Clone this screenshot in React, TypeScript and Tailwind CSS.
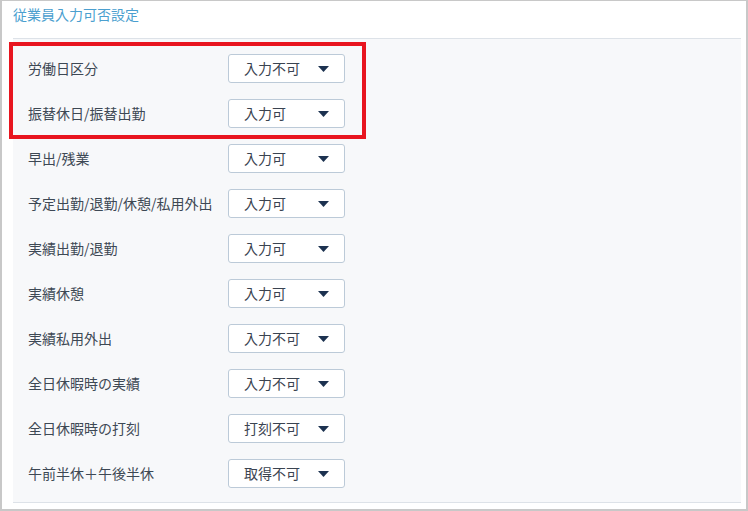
import React from "react";

const rows: { label: string; value: string }[] = [
  { label: "労働日区分", value: "入力不可" },
  { label: "振替休日/振替出勤", value: "入力可" },
  { label: "早出/残業", value: "入力可" },
  { label: "予定出勤/退勤/休憩/私用外出", value: "入力可" },
  { label: "実績出勤/退勤", value: "入力可" },
  { label: "実績休憩", value: "入力可" },
  { label: "実績私用外出", value: "入力不可" },
  { label: "全日休暇時の実績", value: "入力不可" },
  { label: "全日休暇時の打刻", value: "打刻不可" },
  { label: "午前半休＋午後半休", value: "取得不可" },
];

function Select({ value }: { value: string }) {
  return (
    <div className="flex h-[29px] w-[117px] items-center justify-between rounded-[3px] border border-[#bccad8] bg-white pl-[15px] pr-[15px]">
      <span className="pb-[2px] text-[14px] leading-none text-[#3a4350]">{value}</span>
      <svg width="11" height="6" viewBox="0 0 11 6" className="mt-[1px]">
        <path d="M0 0 L11 0 L5.5 6 Z" fill="#1c3250" />
      </svg>
    </div>
  );
}

export default function App() {
  return (
    <div
      className="relative h-[511px] w-[748px] border-b-2 border-l-2 border-r-2 border-t border-[#c8c8c8] bg-white"
      style={{ fontFamily: '"Noto Sans CJK JP", "Noto Sans", sans-serif' }}
    >
      <div className="h-[37px] pl-[11px] pt-[3px] text-[14px] leading-[20px] text-[#4b9fcf]">
        従業員入力可否設定
      </div>
      <div className="ml-[11px] mr-[5px] flex flex-col gap-[16px] border-b border-t border-[#dde2e8] bg-[#f7f8fa] pb-[14px] pl-[15px] pt-[15px]">
        {rows.map((r) => (
          <div key={r.label} className="flex h-[29px] items-center">
            <div className="w-[200px] pb-[2px] text-[14px] leading-none text-[#3d4854]">{r.label}</div>
            <Select value={r.value} />
          </div>
        ))}
      </div>
      <div className="pointer-events-none absolute left-[7px] top-[41px] h-[97px] w-[357px] border-[4px] border-[#e8151f]" />
    </div>
  );
}
